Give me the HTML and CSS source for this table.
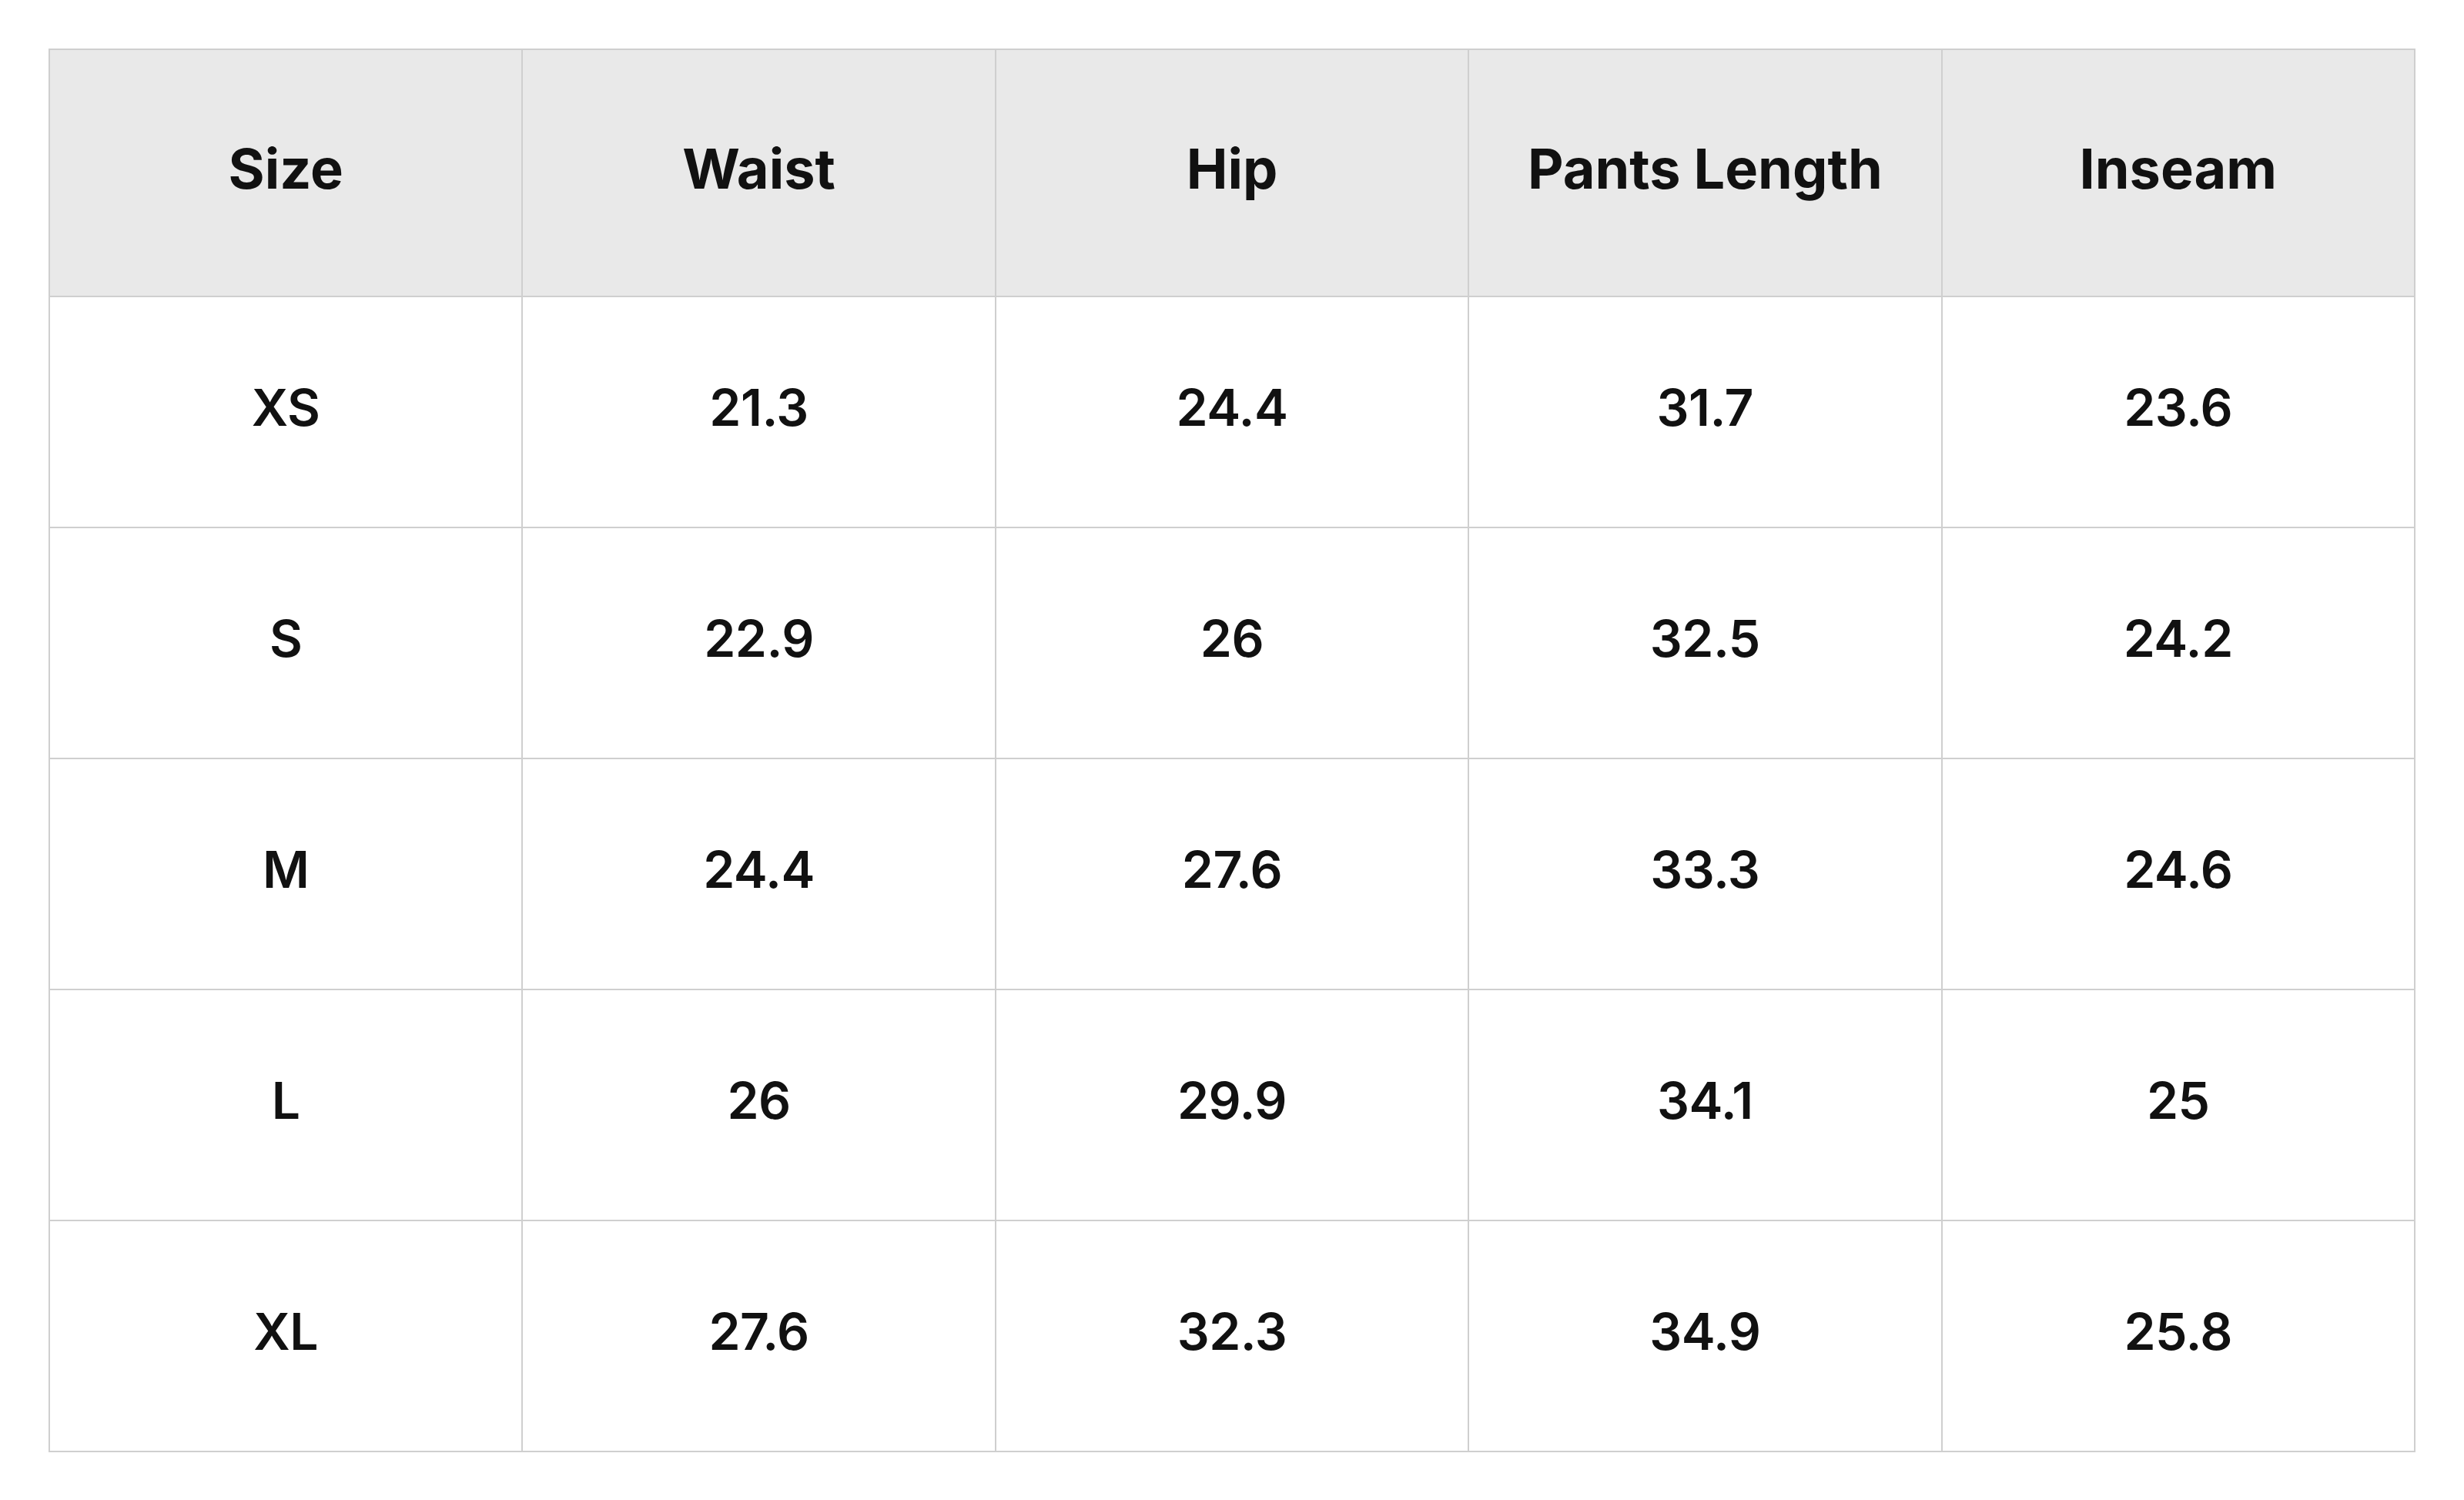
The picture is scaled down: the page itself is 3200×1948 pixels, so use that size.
FILE: index.html
```html
<!DOCTYPE html>
<html>
<head>
<meta charset="utf-8">
<link rel="stylesheet" href="styles.css">
</head>
<body>
<div class="wrap">
<table class="size-table">
  <thead>
    <tr><th>Size</th><th>Waist</th><th>Hip</th><th>Pants Length</th><th>Inseam</th></tr>
  </thead>
  <tbody>
    <tr><td>XS</td><td>21.3</td><td>24.4</td><td>31.7</td><td>23.6</td></tr>
    <tr><td>S</td><td>22.9</td><td>26</td><td>32.5</td><td>24.2</td></tr>
    <tr><td>M</td><td>24.4</td><td>27.6</td><td>33.3</td><td>24.6</td></tr>
    <tr><td>L</td><td>26</td><td>29.9</td><td>34.1</td><td>25</td></tr>
    <tr><td>XL</td><td>27.6</td><td>32.3</td><td>34.9</td><td>25.8</td></tr>
  </tbody>
</table>
</div>
</body>
</html>
```
FILE: styles.css
```css
html, body {
  margin: 0;
  padding: 0;
  background: #ffffff;
}
.wrap {
  padding: 63px 63px 0 63px;
}
.size-table {
  width: 3074px;
  border-collapse: collapse;
  table-layout: fixed;
  font-family: Inter, "Noto Sans", sans-serif;
  font-weight: 600;
  color: #111111;
}
.size-table th,
.size-table td {
  border: 2px solid #cfcfcf;
  text-align: center;
  vertical-align: middle;
  padding: 0 0 12px 0;
  font-size: 66px;
  letter-spacing: -0.5px;
}
.size-table th {
  height: 307px;
  background: #e9e9e9;
  font-weight: 700;
  font-size: 72px;
  letter-spacing: 0;
}
.size-table td {
  height: 286px;
}
```
